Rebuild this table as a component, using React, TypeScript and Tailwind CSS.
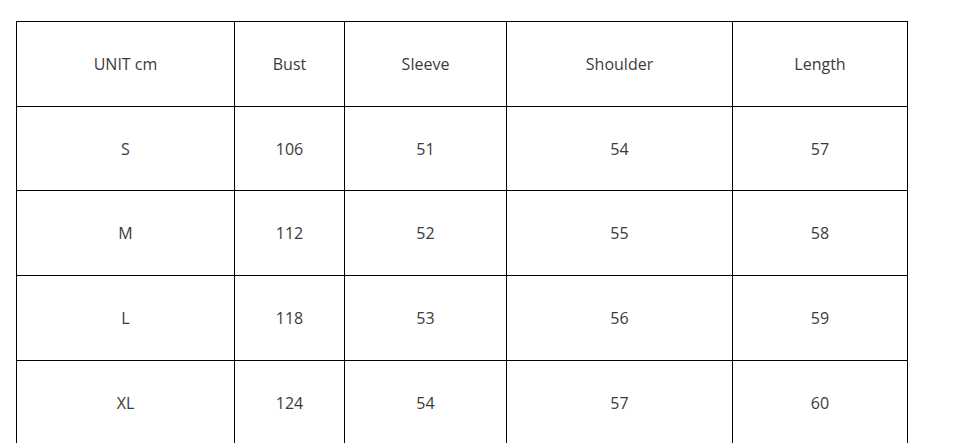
import React from 'react';

const headers = ['UNIT cm', 'Bust', 'Sleeve', 'Shoulder', 'Length'];

const rows = [
  ['S', '106', '51', '54', '57'],
  ['M', '112', '52', '55', '58'],
  ['L', '118', '53', '56', '59'],
  ['XL', '124', '54', '57', '60'],
];

function Cell({ children }: { children: React.ReactNode }) {
  return (
    <div className="flex items-center justify-center bg-white text-[16px] text-[#3b3b3b]">
      {children}
    </div>
  );
}

export default function App() {
  return (
    <div className="h-screen overflow-hidden bg-white pl-4 pt-[21px] font-['Open_Sans',sans-serif]">
      <div className="grid w-fit grid-cols-[217px_109px_161px_225px_174px] grid-rows-[84px_83px_84px_84px_84px] gap-px bg-black p-px">
        {headers.map((h) => (
          <Cell key={h}>{h}</Cell>
        ))}
        {rows.map((row) =>
          row.map((v, i) => <Cell key={row[0] + i}>{v}</Cell>)
        )}
      </div>
    </div>
  );
}
